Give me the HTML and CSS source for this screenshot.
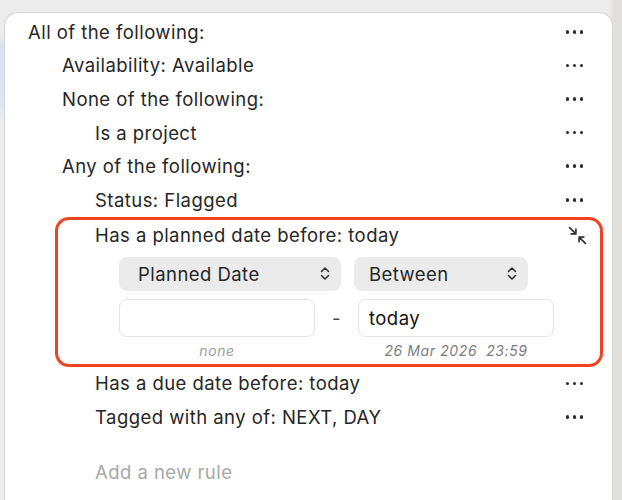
FILE: index.html
```html
<!DOCTYPE html>
<html lang="en">
<head>
  <meta charset="UTF-8">
  <title>Perspective rules</title>
  <link rel="stylesheet" href="styles.css">
</head>
<body>

<div class="panel">
  <div class="rule lvl0"><span class="label">All of the following:</span><span class="more"><i></i><i></i><i></i></span></div>
  <div class="rule lvl1"><span class="label">Availability: Available</span><span class="more"><i></i><i></i><i></i></span></div>
  <div class="rule lvl1"><span class="label">None of the following:</span><span class="more"><i></i><i></i><i></i></span></div>
  <div class="rule lvl2"><span class="label">Is a project</span><span class="more"><i></i><i></i><i></i></span></div>
  <div class="rule lvl1"><span class="label">Any of the following:</span><span class="more"><i></i><i></i><i></i></span></div>
  <div class="rule lvl2"><span class="label">Status: Flagged</span><span class="more"><i></i><i></i><i></i></span></div>

  <div class="editing">
    <div class="edit-head">
      <span class="label">Has a planned date before: today</span>
      <svg class="collapse" width="19" height="19" viewBox="0 0 18 18">
        <path d="M1.5 1.5 L7.5 7.5 M7.5 3 L7.5 7.5 L3 7.5" />
        <path d="M16.5 16.5 L10.5 10.5 M10.5 15 L10.5 10.5 L15 10.5" />
      </svg>
    </div>
    <div class="pickers">
      <div class="popup wide">Planned Date
        <svg class="updown" width="10" height="15" viewBox="0 0 10 15"><path d="M1.5 5.5 L5 2 L8.5 5.5 M1.5 9.5 L5 13 L8.5 9.5" /></svg>
      </div>
      <div class="popup narrow">Between
        <svg class="updown" width="10" height="15" viewBox="0 0 10 15"><path d="M1.5 5.5 L5 2 L8.5 5.5 M1.5 9.5 L5 13 L8.5 9.5" /></svg>
      </div>
    </div>
    <div class="fields">
      <div class="field"></div>
      <span class="dash">-</span>
      <div class="field">today</div>
    </div>
    <div class="hints">
      <span class="hint">none</span>
      <span class="hint">26 Mar 2026&nbsp;&nbsp;23:59</span>
    </div>
  </div>

  <div class="rule lvl2"><span class="label">Has a due date before: today</span><span class="more"><i></i><i></i><i></i></span></div>
  <div class="rule lvl2"><span class="label">Tagged with any of: NEXT, DAY</span><span class="more"><i></i><i></i><i></i></span></div>

  <div class="rule lvl2 add"><span class="label">Add a new rule</span></div>
</div>

</body>
</html>
```

FILE: styles.css
```css
body {
  margin: 0;
  height: 500px;
  overflow: hidden;
  background:
    linear-gradient(to bottom, transparent 35px, #d6e4f2 45px, #dbe7f3 105px, transparent 120px) left / 5px 100% no-repeat,
    linear-gradient(to right, #ececec 0, #ececec 610px, #e2dfda 614px);
  font-family: Inter, "Noto Sans", sans-serif;
  color: #262626;
}

.panel {
  margin: 12px 9px 0 4px;
  height: 488px;
  background: #fff;
  border: 1px solid #d4d4d4;
  border-bottom: none;
  border-radius: 14px 14px 0 0;
  padding-top: 2px;
  box-sizing: border-box;
}

.rule {
  display: flex;
  align-items: center;
  justify-content: space-between;
  height: 33.6px;
  padding-right: 29px;
  font-size: 18.5px;
  letter-spacing: 0.45px;
}

.lvl0 { padding-left: 23px; }
.lvl1 { padding-left: 57px; }
.lvl2 { padding-left: 90px; }

.more {
  display: flex;
  gap: 3.5px;
}

.more i {
  display: block;
  width: 3.5px;
  height: 3.5px;
  border-radius: 50%;
  background: #2a2a2a;
}

.add {
  margin-top: 21px;
  color: #a8a8a8;
}

.editing {
  margin: 0 9px 0 50px;
  height: 150px;
  border: 3px solid #ef4423;
  border-radius: 14px;
  box-sizing: border-box;
  font-size: 18.5px;
  letter-spacing: 0.45px;
}

.edit-head {
  display: flex;
  align-items: center;
  justify-content: space-between;
  height: 30px;
  padding: 0 13px 0 37px;
}

.collapse {
  margin-top: 1px;
  fill: none;
  stroke: #333;
  stroke-width: 1.6;
  stroke-linecap: round;
  stroke-linejoin: round;
}

.pickers {
  display: flex;
  gap: 13px;
  margin: 7px 0 0 61px;
}

.popup {
  display: flex;
  align-items: center;
  justify-content: space-between;
  height: 34px;
  padding: 0 11px 0 19px;
  background: #ebebeb;
  border-radius: 8px;
  box-sizing: border-box;
}

.popup.wide { width: 222px; }
.popup.narrow { width: 174px; padding-left: 15px; }

.updown {
  fill: none;
  stroke: #333;
  stroke-width: 1.6;
  stroke-linecap: round;
  stroke-linejoin: round;
}

.fields {
  display: flex;
  align-items: center;
  margin: 8px 0 0 61px;
}

.field {
  width: 196px;
  height: 38px;
  padding-left: 10px;
  border: 1px solid #e4e4e4;
  border-radius: 8px;
  box-sizing: border-box;
  display: flex;
  align-items: center;
  color: #111;
}

.dash {
  width: 43px;
  text-align: center;
  color: #444;
}

.hints {
  display: flex;
  gap: 43px;
  margin: 0 0 0 61px;
}

.hint {
  width: 196px;
  text-align: center;
  font-size: 14px;
  font-style: italic;
  line-height: 16px;
  letter-spacing: 0.6px;
  color: #9b9b9b;
  padding-top: 6px;
}

.hint + .hint { color: #7c7c7c; }
```
